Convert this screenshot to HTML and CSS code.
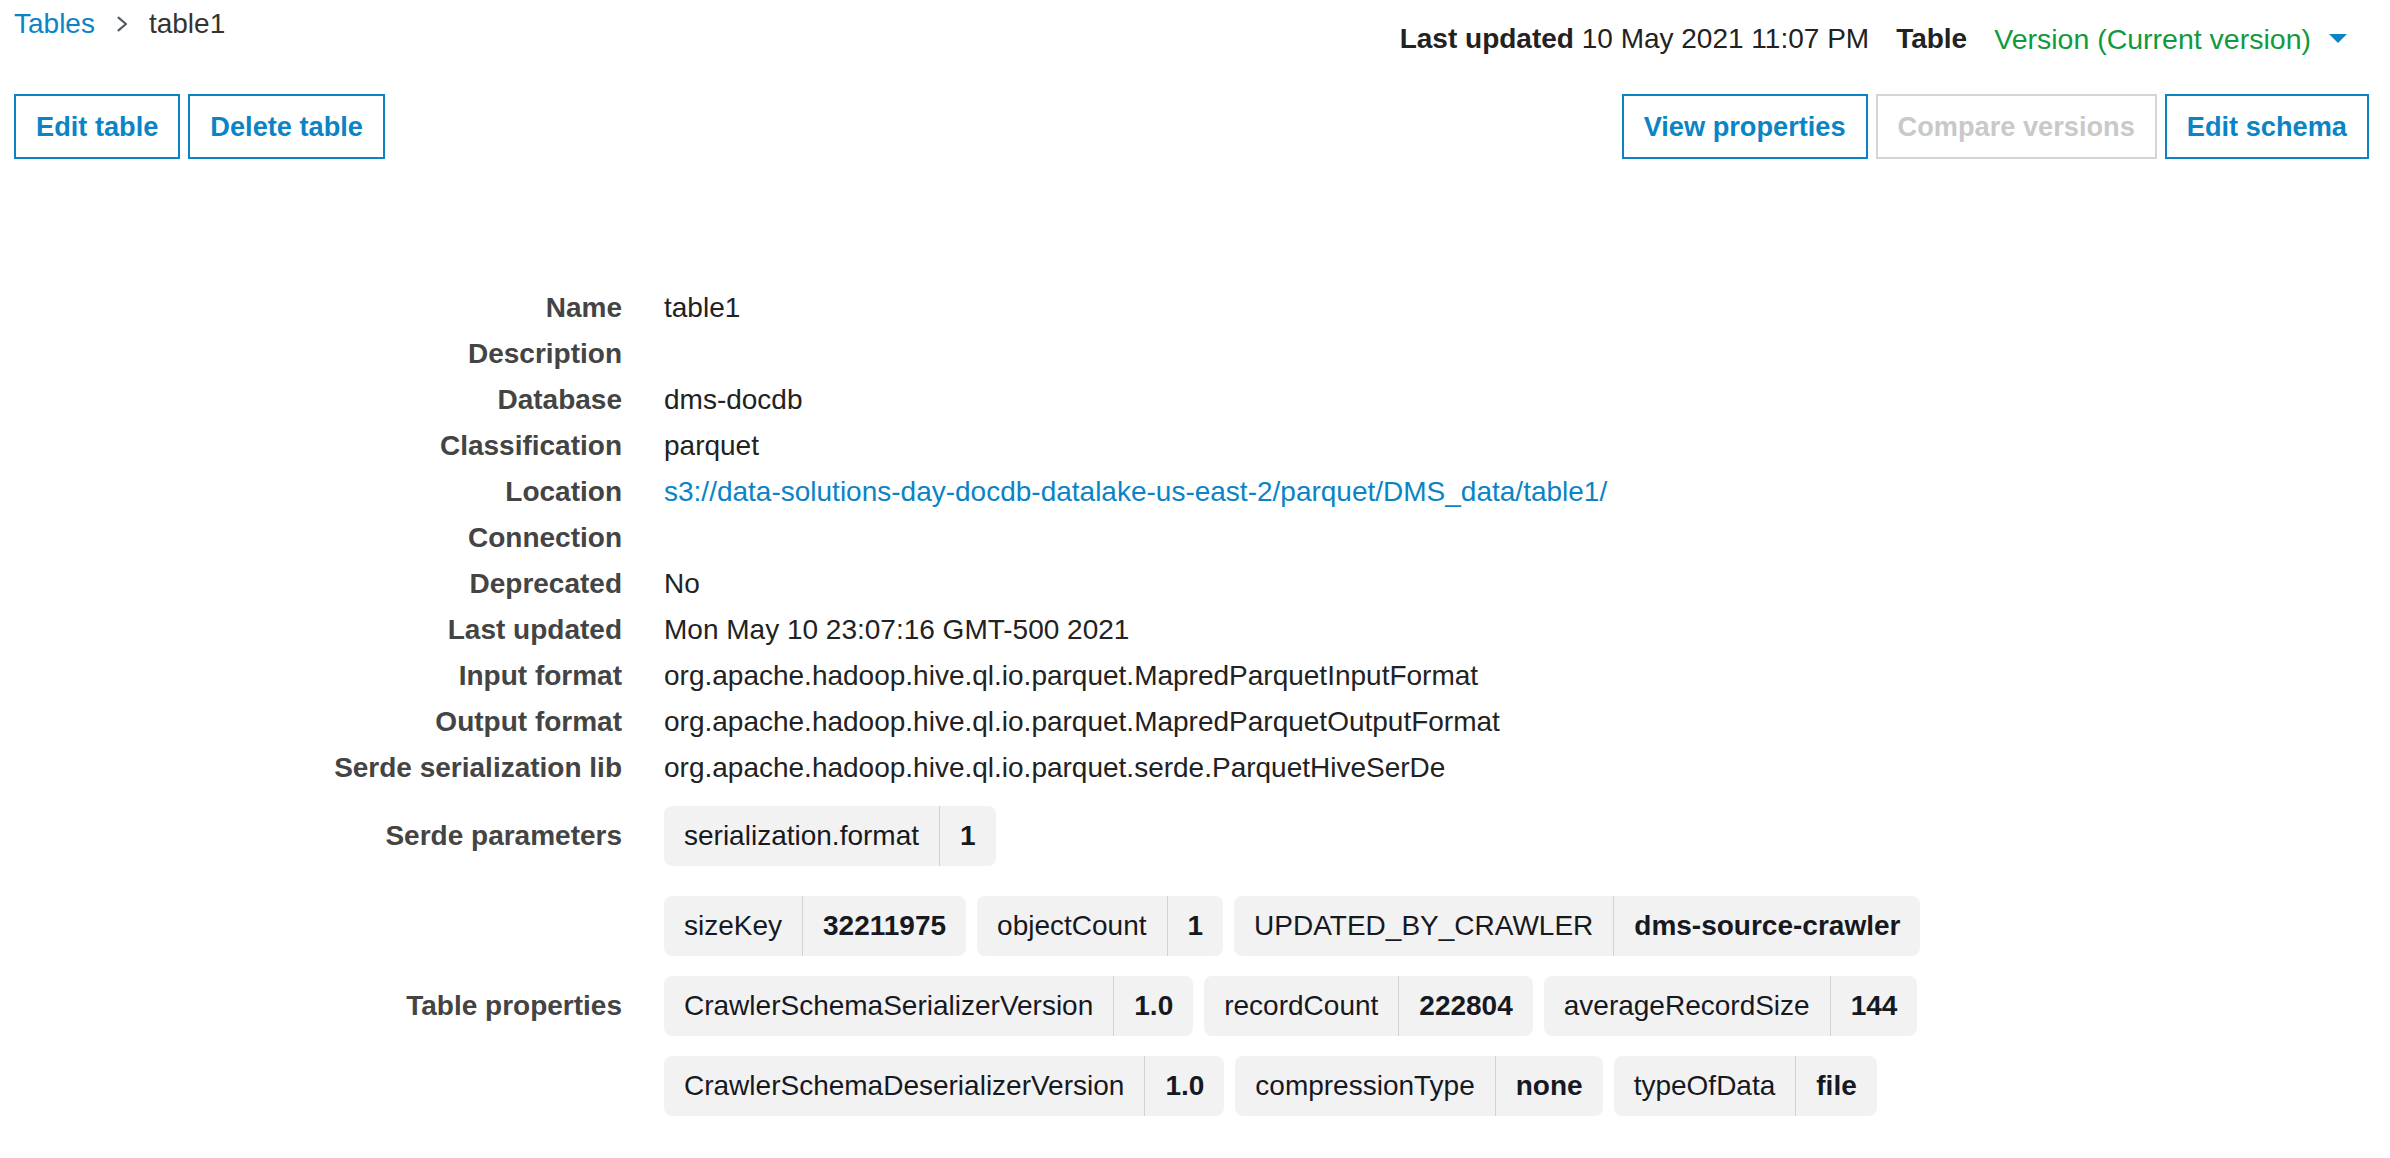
FILE: index.html
```html
<!DOCTYPE html>
<html lang="en">
<head>
<meta charset="utf-8">
<title>table1</title>
<link rel="stylesheet" href="styles.css">
</head>
<body>
<div class="page">
  <header class="topbar">
    <nav class="crumbs">
      <a class="crumb-link" href="#">Tables</a>
      <svg class="chev" width="12" height="16" viewBox="0 0 12 16" aria-hidden="true"><path d="M2.5 1.6 L10 8 L2.5 14.4" fill="none" stroke="#545b64" stroke-width="2.2" stroke-linecap="round" stroke-linejoin="round"/></svg>
      <span class="crumb-current">table1</span>
    </nav>
    <div class="meta">
      <span class="meta-item"><b>Last updated</b> 10 May 2021 11:07 PM</span>
      <b class="meta-item gap">Table</b>
      <span class="version gap">Version (Current version)</span>
      <svg class="caret" width="18" height="9" viewBox="0 0 18 9" aria-hidden="true"><polygon points="0,0 18,0 9,9" fill="#0b84c6"/></svg>
    </div>
  </header>

  <div class="toolbar">
    <div class="btn-group">
      <button class="btn">Edit table</button>
      <button class="btn">Delete table</button>
    </div>
    <div class="btn-group">
      <button class="btn">View properties</button>
      <button class="btn disabled" disabled>Compare versions</button>
      <button class="btn">Edit schema</button>
    </div>
  </div>

  <section class="details">
    <div class="row"><div class="label">Name</div><div class="value">table1</div></div>
    <div class="row"><div class="label">Description</div><div class="value"></div></div>
    <div class="row"><div class="label">Database</div><div class="value">dms-docdb</div></div>
    <div class="row"><div class="label">Classification</div><div class="value">parquet</div></div>
    <div class="row"><div class="label">Location</div><div class="value"><a class="link" href="#">s3://data-solutions-day-docdb-datalake-us-east-2/parquet/DMS_data/table1/</a></div></div>
    <div class="row"><div class="label">Connection</div><div class="value"></div></div>
    <div class="row"><div class="label">Deprecated</div><div class="value">No</div></div>
    <div class="row"><div class="label">Last updated</div><div class="value">Mon May 10 23:07:16 GMT-500 2021</div></div>
    <div class="row"><div class="label">Input format</div><div class="value">org.apache.hadoop.hive.ql.io.parquet.MapredParquetInputFormat</div></div>
    <div class="row"><div class="label">Output format</div><div class="value">org.apache.hadoop.hive.ql.io.parquet.MapredParquetOutputFormat</div></div>
    <div class="row"><div class="label">Serde serialization lib</div><div class="value">org.apache.hadoop.hive.ql.io.parquet.serde.ParquetHiveSerDe</div></div>

    <div class="row chip-row serde">
      <div class="label">Serde parameters</div>
      <div class="chips">
        <span class="chip"><span class="k">serialization.format</span><span class="v">1</span></span>
      </div>
    </div>

    <div class="row chip-row props">
      <div class="label">Table properties</div>
      <div class="chips">
        <span class="chip"><span class="k">sizeKey</span><span class="v">32211975</span></span>
        <span class="chip"><span class="k">objectCount</span><span class="v">1</span></span>
        <span class="chip"><span class="k">UPDATED_BY_CRAWLER</span><span class="v">dms-source-crawler</span></span>
        <span class="chip"><span class="k">CrawlerSchemaSerializerVersion</span><span class="v">1.0</span></span>
        <span class="chip"><span class="k">recordCount</span><span class="v">222804</span></span>
        <span class="chip"><span class="k">averageRecordSize</span><span class="v">144</span></span>
        <span class="chip"><span class="k">CrawlerSchemaDeserializerVersion</span><span class="v">1.0</span></span>
        <span class="chip"><span class="k">compressionType</span><span class="v">none</span></span>
        <span class="chip"><span class="k">typeOfData</span><span class="v">file</span></span>
      </div>
    </div>
  </section>
</div>
</body>
</html>
```

FILE: styles.css
```css
html, body {
  margin: 0;
  padding: 0;
  background: #ffffff;
}

body {
  font-family: "Liberation Sans", Arial, Helvetica, sans-serif;
  color: #222222;
  font-size: 28px;
}

.page {
  padding: 6px 21px 0 14px;
}

/* top bar */
.topbar {
  display: flex;
  justify-content: space-between;
  align-items: flex-start;
}

.crumbs {
  display: flex;
  align-items: center;
  height: 36px;
  font-size: 28px;
  line-height: 36px;
}

.crumb-link {
  color: #0b84c6;
  text-decoration: none;
}

.chev {
  margin: 0 21px 0 21px;
}

.crumb-current {
  color: #333333;
}

.meta {
  display: flex;
  align-items: center;
  margin-top: 15px;
  line-height: 36px;
  font-size: 28px;
  color: #222222;
}

.meta b {
  font-weight: 700;
}

.gap {
  margin-left: 27px;
}

.version {
  color: #0f9a40;
  font-size: 28.5px;
}

.caret {
  margin-left: 18px;
  margin-right: 22px;
  position: relative;
  top: -1px;
}

/* toolbar */
.toolbar {
  display: flex;
  justify-content: space-between;
  margin-top: 37px;
}

.btn-group {
  display: flex;
  gap: 8px;
}

.btn {
  box-sizing: border-box;
  height: 65px;
  padding: 0 20px;
  border: 2px solid #0b84c6;
  background: #ffffff;
  color: #0b84c6;
  font-family: inherit;
  font-size: 27.2px;
  font-weight: 700;
  border-radius: 0;
  cursor: pointer;
}

.btn.disabled {
  border-color: #d3d5d6;
  color: #c8c9ca;
  cursor: default;
}

/* details */
.details {
  margin-top: 126px;
}

.row {
  display: grid;
  grid-template-columns: 608px 1fr;
  column-gap: 42px;
  align-items: center;
  line-height: 46px;
  min-height: 46px;
}

.label {
  text-align: right;
  font-weight: 700;
  color: #444444;
}

.value {
  color: #222222;
}

.link {
  color: #0b84c6;
  text-decoration: none;
}

.chip-row.serde {
  margin-top: 15px;
}

.chip-row.props {
  margin-top: 30px;
}

.chips {
  display: flex;
  flex-wrap: wrap;
  gap: 20px 11px;
}

.chip {
  display: inline-flex;
  height: 60px;
  line-height: 60px;
  background: #f2f2f2;
  border-radius: 8px;
  color: #16191f;
  white-space: nowrap;
}

.chip .k {
  padding: 0 20px;
  border-right: 1px solid #d2d2d2;
}

.chip .v {
  padding: 0 20px;
  font-weight: 700;
}
```
